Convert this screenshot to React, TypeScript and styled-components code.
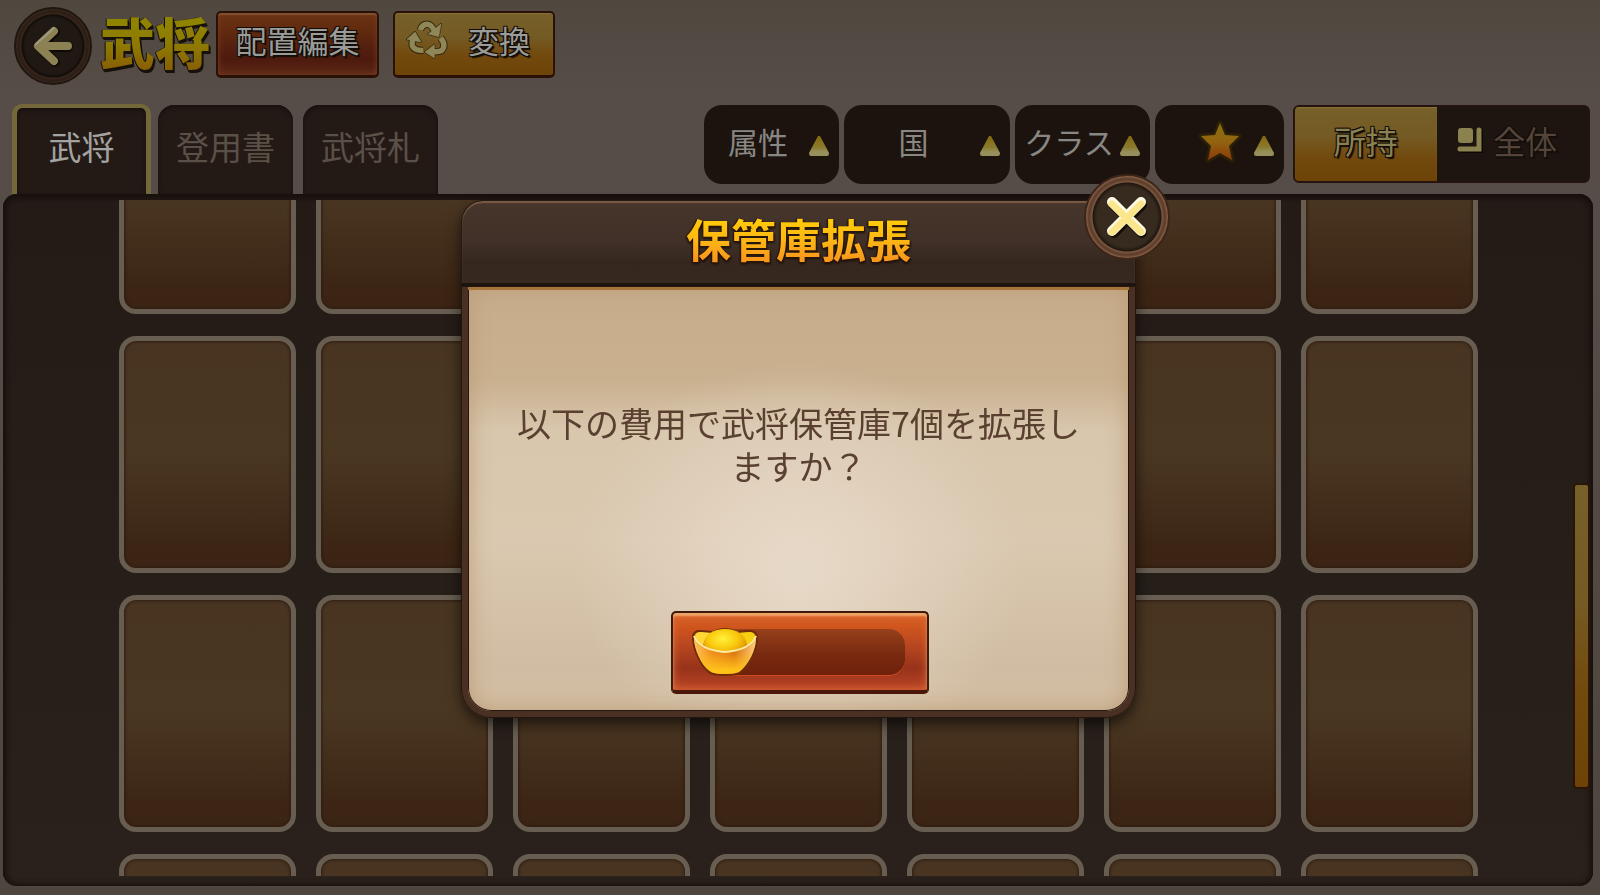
import React from "react";
import styled, { createGlobalStyle, css } from "styled-components";

const GlobalStyle = createGlobalStyle`
  *, *::before, *::after { box-sizing: border-box; }
  body { margin: 0; background: #544b45; }
  body, button {
    font-family: "Noto Sans CJK JP", "Noto Sans", sans-serif;
    font-weight: 400;
  }
  button { padding: 0; border: 0; background: none; color: inherit; cursor: pointer; }
  h1, h2, p, ul { margin: 0; padding: 0; }
`;

const Screen = styled.div`
  display: flex;
  flex-direction: column;
  height: 100vh;
  overflow: hidden;
  background: linear-gradient(180deg, #50473f 0, #564d48 100px, #564d49 190px, #4e453e 100%);
`;

const Header = styled.header`
  display: flex;
  align-items: flex-start;
  padding: 7px 14px 0;
  height: 104px;
`;

const RoundButton = styled.button<{ $lit?: boolean }>`
  display: grid;
  place-items: center;
  width: ${(p) => (p.$lit ? 86 : 78)}px;
  height: ${(p) => (p.$lit ? 86 : 78)}px;
  border-radius: 50%;
  border: 2px solid ${(p) => (p.$lit ? "#3b2619" : "#1f1610")};
  background: ${(p) =>
    p.$lit
      ? "radial-gradient(circle, #372b20 0 30px, #21170f 34px, #7a563e 35px, #5a3b29 38px, #8a6148 41px)"
      : "radial-gradient(circle, #1f1813 0 28px, #120c08 31px, #35251b 32px, #2b1d15 35px, #3c2a20 37px)"};
`;

const PageTitle = styled.h1`
  padding: 0 6px 0 8px;
  font-size: 55px;
  line-height: 66px;
  font-weight: 900;
  color: transparent;
  background: linear-gradient(180deg, #8f8400 15px, #8e7a02 38px, #885f05 62px) text;
  filter: drop-shadow(1px 1px 0 #17110b) drop-shadow(-1px 0 0 #17110b) drop-shadow(1px 2px 0 #17110b);
`;

const goldFill = css`
  background: linear-gradient(180deg, #77602a 0, #745a23 40%, #724a0e 68%, #6d4307 100%);
`;

const outline = css`
  text-shadow: 1px 1px 0 #120d09, -1px 1px 0 #120d09, 1px -1px 0 #120d09, -1px -1px 0 #120d09, 2px 2px 1px #120d09;
`;

const HeaderButton = styled.button<{ $tone: "red" | "gold" }>`
  display: flex;
  align-items: center;
  justify-content: center;
  gap: 20px;
  height: 67px;
  margin-top: 4px;
  margin-right: 14px;
  border: 2px solid #2a1108;
  border-bottom-width: 3px;
  border-radius: 5px;
  font-size: 31px;
  line-height: 40px;
  padding-bottom: 8px;
  color: #9b9c98;
  ${outline}
  ${(p) =>
    p.$tone === "red"
      ? css`
          width: 163px;
          background: linear-gradient(180deg, #6c3216 0, #632c0f 25%, #54200f 55%, #4d1a0e 75%, #5c2716 100%);
          box-shadow: inset 0 2px 1px #835030, inset 0 0 6px #7a3d20;
        `
      : css`
          width: 162px;
          padding-right: 12px;
          ${goldFill}
          box-shadow: inset 0 1px 1px #8a7238;
        `}
`;

const NavRow = styled.div`
  display: flex;
  justify-content: space-between;
  height: 90px;
  padding: 0 10px 0 12px;
`;

const Tabs = styled.div`
  display: flex;
  align-items: flex-end;
  gap: 10px;
`;

const Tab = styled.button<{ $active?: boolean }>`
  width: ${(p) => (p.$active ? 139 : 135)}px;
  height: ${(p) => (p.$active ? 90 : 89)}px;
  margin-right: ${(p) => (p.$active ? -3 : 0)}px;
  padding-bottom: ${(p) => (p.$active ? 10 : 8)}px;
  font-size: 33px;
  line-height: 44px;
  background: #231a16;
  color: #5b5048;
  border-radius: 16px 16px 0 0;
  box-shadow: inset 0 2px 4px #17100d;
  ${(p) =>
    p.$active &&
    css`
      color: #a3a3a1;
      border: solid #74683a;
      border-width: 4px 5px 0;
      border-radius: 10px 10px 0 0;
    `}
`;

const Filters = styled.div`
  display: flex;
  gap: 5px;
  padding-top: 1px;
`;

const FilterButton = styled.button<{ $width: number }>`
  display: flex;
  align-items: center;
  justify-content: flex-end;
  width: ${(p) => p.$width}px;
  height: 79px;
  padding: 0 9px 8px 8px;
  border-radius: 18px;
  background: #1c130e;
  color: #888784;
  font-size: 30px;
  line-height: 40px;
`;

const FilterLabel = styled.span<{ $icon?: boolean }>`
  flex: 1;
  display: flex;
  justify-content: ${(p) => (p.$icon ? "flex-end" : "center")};
  padding-right: ${(p) => (p.$icon ? 10 : 4)}px;
  white-space: nowrap;
`;

const Marker = styled.svg`
  flex: none;
  margin-top: 10px;
`;

const OwnerSwitch = styled.div`
  display: flex;
  height: 78px;
  width: 297px;
  margin-left: 4px;
  border: 2px solid #25150e;
  border-radius: 6px;
  overflow: hidden;
  background: #1e1511;
`;

const OwnerOption = styled.button<{ $on?: boolean }>`
  flex: 1;
  display: flex;
  align-items: center;
  justify-content: center;
  gap: 10px;
  padding: 0 10px 8px 0;
  font-size: 32px;
  line-height: 40px;
  color: #54443a;
  ${outline}
  ${(p) =>
    p.$on &&
    css`
      padding-right: 0;
      ${goldFill}
      color: #8a8152;
      box-shadow: inset 0 1px 1px #8a7238;
    `}
`;

const Storage = styled.main`
  display: grid;
  grid-template-columns: 1fr 20px;
  flex: 1;
  min-height: 0;
  margin: 0 7px 9px 3px;
  border-radius: 14px;
  background: linear-gradient(180deg, #241b17, #261e18 50%, #2a211c);
  box-shadow: inset 0 3px 5px #17100c, inset 2px 0 6px #1a120e, inset -2px 0 6px #1a120e;
`;

const Viewport = styled.div`
  min-height: 0;
  margin: 6px 0 10px;
  padding: 0 95px 0 116px;
  overflow: hidden;
`;

const SlotGrid = styled.ul`
  display: grid;
  grid-template-columns: repeat(7, 1fr);
  grid-auto-rows: 237px;
  gap: 22px 20px;
  margin-top: -123px;
  list-style: none;
`;

const Slot = styled.li`
  border: 5px solid #675d50;
  border-radius: 17px;
  background: linear-gradient(180deg, #483421 0, #4a3722 48%, #432e1c 70%, #3c2514 90%, #3b2413 100%);
  box-shadow: inset 0 0 3px 1px #2f1d12;
`;

const ScrollTrack = styled.div`
  display: grid;
  grid-template-rows: 289fr 306fr 97fr;
  padding-right: 3px;
`;

const ScrollThumb = styled.div`
  grid-row: 2;
  ${goldFill}
  border: 2px solid #2a1508;
  border-radius: 4px;
`;

const Overlay = styled.div`
  position: fixed;
  inset: 0;
  display: flex;
  align-items: center;
  justify-content: center;
  padding: 23px 3px 0 0;
`;

const Dialog = styled.section`
  position: relative;
  width: 675px;
  border-radius: 24px 24px 30px 30px;
  box-shadow: 0 6px 14px rgba(0, 0, 0, 0.6);
`;

const DialogHead = styled.header`
  height: 86px;
  border-radius: 22px 22px 0 0;
  border: 1px solid #241a14;
  border-bottom: 3px solid #1e140f;
  background: linear-gradient(180deg, #47362c 0, #403027 50%, #35271f 75%, #37291f 100%);
  box-shadow: inset 0 2px 1px #7a5a45;
  text-align: center;
`;

const DialogTitle = styled.h2`
  font-size: 45px;
  line-height: 76px;
  font-weight: 700;
  color: transparent;
  background: linear-gradient(180deg, #ffcc08 18px, #fdb515 40px, #f9981c 58px) text;
  filter: drop-shadow(1px 1px 0 #2a1608) drop-shadow(-1px 0 0 #2a1608) drop-shadow(0 1px 1px #1a0d04);
`;

const DialogBody = styled.div`
  display: flex;
  flex-direction: column;
  align-items: center;
  height: 432px;
  padding: 0 34px 17px;
  border: 7px solid #4a3022;
  border-top: 0;
  border-radius: 0 0 30px 30px;
  outline: 1px solid #24170f;
  outline-offset: -1px;
  background: radial-gradient(ellipse 34% 48% at 50% 66%, rgba(232, 218, 201, 0.9) 10%, transparent 100%),
    linear-gradient(180deg, #c6ac8b 0, #c9b08f 22%, #d8c6ad 34%, #dac8b0 60%, #d0bca2 90%, #d3bfa4 100%);
  box-shadow: inset 0 4px 0 #a57539, inset 0 0 0 1px #241710, inset 0 0 22px #bb9b76;
`;

const Message = styled.p`
  flex: 1;
  display: flex;
  align-items: center;
  padding-bottom: 10px;
  font-size: 34px;
  line-height: 43px;
  text-align: center;
  color: #5a4030;
`;

const CostButton = styled.button`
  display: flex;
  align-items: center;
  width: 258px;
  height: 83px;
  margin-left: 3px;
  padding: 0 22px 0 18px;
  border: 2px solid #3c1a0c;
  border-bottom: 4px solid #4a170b;
  border-radius: 5px;
  background: linear-gradient(180deg, #d9682d 0, #cf551d 18%, #b5441f 45%, #97331a 72%, #bb4527 100%);
  box-shadow: inset 0 3px 2px #f0a468, inset 0 0 8px #df6d3a;
`;

const CostField = styled.span`
  flex: 1;
  height: 46px;
  margin-left: -36px;
  border-radius: 0 16px 16px 0;
  background: linear-gradient(180deg, #97401a, #782a10 55%, #6f200a);
  box-shadow: 0 1px 0 #d24a20;
`;

const Ingot = styled.svg`
  position: relative;
  flex: none;
`;

const CloseSlot = styled.div`
  position: absolute;
  top: -26px;
  right: -34px;
`;

function BackIcon() {
  return (
    <svg width="44" height="42" viewBox="0 0 44 42" fill="none" strokeLinecap="round" strokeLinejoin="round">
      <path d="M24 7 L9 22 L24 37 M9 22 H37" stroke="#0f0a06" strokeWidth="10" />
      <path d="M23 6 L7 21 L23 36 M8 21 H37" stroke="#8b8152" strokeWidth="8" />
      <path d="M23 3 L5 19" stroke="#a09a82" strokeWidth="2" />
    </svg>
  );
}

function CloseIcon() {
  return (
    <svg width="46" height="46" viewBox="0 0 46 46" fill="none" strokeLinecap="butt" strokeLinejoin="round">
      <path d="M10 11 L38 39 M38 11 L10 39" stroke="#150d06" strokeWidth="10" strokeLinecap="round" />
      <path d="M8 8 L37 37 M37 8 L8 37" stroke="#fffbe6" strokeWidth="10" strokeLinecap="round" />
      <path d="M8 10 L37 38 M37 10 L8 38" stroke="#fce68c" strokeWidth="7" strokeLinecap="round" />
    </svg>
  );
}

function RecycleIcon() {
  const heads = "M150 66 L143 104 L112 96 Z M102 150 L130 128 V168 Z M72 90 L90 120 L48 112 Z";
  const bands = "M88 84 Q94 65 112 67 Q121 68 131 88 M149 108 Q167 130 152 146 Q144 150 126 149 M97 145 Q76 147 67 136 Q60 128 66 112";
  return (
    <svg width="42" height="40" viewBox="45 54 126 120" strokeLinejoin="round">
      <g stroke="#35270f" fill="#35270f" strokeWidth="6">
        <path d={heads} />
        <path d={bands} fill="none" strokeWidth="22" />
      </g>
      <path d={heads} fill="#8f8757" stroke="#8f8757" strokeWidth="2" />
      <path d={bands} fill="none" stroke="#8f8757" strokeWidth="16" />
    </svg>
  );
}

function Triangle() {
  return (
    <Marker width="22" height="22" viewBox="0 0 22 22">
      <defs>
        <linearGradient id="tri" x1="0" y1="0" x2="0" y2="1">
          <stop offset="0" stopColor="#86690d" />
          <stop offset=".55" stopColor="#8a7a2c" />
          <stop offset=".8" stopColor="#97905c" />
        </linearGradient>
      </defs>
      <path d="M10 1 H12 L21 18 Q21 21 19 21 H3 Q1 21 1 18 Z" fill="url(#tri)" />
    </Marker>
  );
}

function StarIcon() {
  return (
    <svg width="46" height="48" viewBox="0 0 46 48">
      <defs>
        <linearGradient id="star" x1="0" y1="0" x2="0" y2="1">
          <stop offset="0" stopColor="#8c700f" />
          <stop offset=".5" stopColor="#926410" />
          <stop offset="1" stopColor="#8a3a0a" />
        </linearGradient>
      </defs>
      <path
        d="M23 6 L28 18 L42 19 L32 29 L35 43 L23 36 L11 43 L14 29 L4 19 L18 18 Z"
        fill="url(#star)"
        stroke="#2b2006"
        strokeWidth="5"
        strokeLinejoin="round"
        paintOrder="stroke"
      />
    </svg>
  );
}

function StackIcon() {
  return (
    <svg width="26" height="26" viewBox="0 0 26 26">
      <path d="M3 23 H23 V3" fill="none" stroke="#0c0805" strokeWidth="6" />
      <rect x="1" y="1" width="15" height="15" rx="3" fill="#8b824f" />
      <path d="M3 22 H22 V3" fill="none" stroke="#8b824f" strokeWidth="5" strokeLinecap="round" />
    </svg>
  );
}

function IngotIcon() {
  return (
    <Ingot width="68" height="50" viewBox="0 0 68 50">
      <defs>
        <linearGradient id="bowl" x1="0" y1="0" x2="1" y2="0">
          <stop offset="0" stopColor="#ffc45a" />
          <stop offset=".3" stopColor="#f08a1c" />
          <stop offset=".65" stopColor="#d96f12" />
          <stop offset="1" stopColor="#ffd27a" />
        </linearGradient>
        <linearGradient id="glow" x1="0" y1="0" x2="0" y2="1">
          <stop offset=".35" stopColor="#ffc21a" stopOpacity="0" />
          <stop offset=".9" stopColor="#ffc21a" />
        </linearGradient>
        <radialGradient id="ball" cx=".45" cy=".35" r=".65">
          <stop offset="0" stopColor="#fff23a" />
          <stop offset=".55" stopColor="#f8c80c" />
          <stop offset="1" stopColor="#e08c06" />
        </radialGradient>
      </defs>
      <path d="M2 9 Q3 4 9 4 L22 5 Q34 -1 46 5 L58 4 Q65 4 66 9 Q66 20 61 30 Q56 40 50 45 Q47 48 34 48 Q21 48 18 45 Q11 40 7 30 Q2 20 2 9 Z" fill="#c9780c" stroke="#6e2c08" strokeWidth="2" />
      <path d="M4 10 Q4 5 10 5 L20 6 Q13 11 12 19 Q5 14 4 10 Z" fill="#ffd838" />
      <path d="M64 10 Q64 5 58 5 L48 6 Q55 11 56 19 Q63 14 64 10 Z" fill="#f5cf12" />
      <ellipse cx="34" cy="16" rx="21" ry="14" fill="url(#ball)" />
      <path d="M3 11 Q8 24 34 26 Q60 24 65 11 Q65 20 60 30 Q55 39 49 44 Q46 47 34 47 Q22 47 19 44 Q12 39 8 30 Q3 20 3 11 Z" fill="url(#bowl)" />
      <path d="M3 11 Q8 24 34 26 Q60 24 65 11 Q65 20 60 30 Q55 39 49 44 Q46 47 34 47 Q22 47 19 44 Q12 39 8 30 Q3 20 3 11 Z" fill="url(#glow)" />
      <path d="M3 9 Q8 23 34 25 Q60 23 65 9" fill="none" stroke="#ffe9a0" strokeWidth="2" />
    </Ingot>
  );
}

const filters = [
  { name: "属性", width: 135 },
  { name: "国", width: 166 },
  { name: "クラス", width: 135 },
  { name: "", width: 129 },
];

export default function App() {
  return (
    <>
      <GlobalStyle />
      <Screen>
        <Header>
          <RoundButton aria-label="戻る">
            <BackIcon />
          </RoundButton>
          <PageTitle>武将</PageTitle>
          <HeaderButton $tone="red">配置編集</HeaderButton>
          <HeaderButton $tone="gold">
            <RecycleIcon />
            変換
          </HeaderButton>
        </Header>
        <NavRow>
          <Tabs role="tablist">
            <Tab role="tab" aria-selected="true" $active>
              武将
            </Tab>
            <Tab role="tab" aria-selected="false">
              登用書
            </Tab>
            <Tab role="tab" aria-selected="false">
              武将札
            </Tab>
          </Tabs>
          <Filters>
            {filters.map((f) => (
              <FilterButton key={f.name} $width={f.width} aria-haspopup="listbox" aria-label={f.name || "星"}>
                <FilterLabel $icon={!f.name}>{f.name || <StarIcon />}</FilterLabel>
                <Triangle />
              </FilterButton>
            ))}
            <OwnerSwitch role="group">
              <OwnerOption aria-pressed="true" $on>
                所持
              </OwnerOption>
              <OwnerOption aria-pressed="false">
                <StackIcon />
                全体
              </OwnerOption>
            </OwnerSwitch>
          </Filters>
        </NavRow>
        <Storage>
          <Viewport>
            <SlotGrid>
              {Array.from({ length: 28 }, (_, i) => (
                <Slot key={i} />
              ))}
            </SlotGrid>
          </Viewport>
          <ScrollTrack>
            <ScrollThumb />
          </ScrollTrack>
        </Storage>
      </Screen>
      <Overlay>
        <Dialog role="dialog" aria-modal="true" aria-labelledby="dialog-title">
          <DialogHead>
            <DialogTitle id="dialog-title">保管庫拡張</DialogTitle>
          </DialogHead>
          <DialogBody>
            <Message>以下の費用で武将保管庫7個を拡張しますか？</Message>
            <CostButton aria-label="拡張する">
              <IngotIcon />
              <CostField />
            </CostButton>
          </DialogBody>
          <CloseSlot>
            <RoundButton $lit aria-label="閉じる">
              <CloseIcon />
            </RoundButton>
          </CloseSlot>
        </Dialog>
      </Overlay>
    </>
  );
}
